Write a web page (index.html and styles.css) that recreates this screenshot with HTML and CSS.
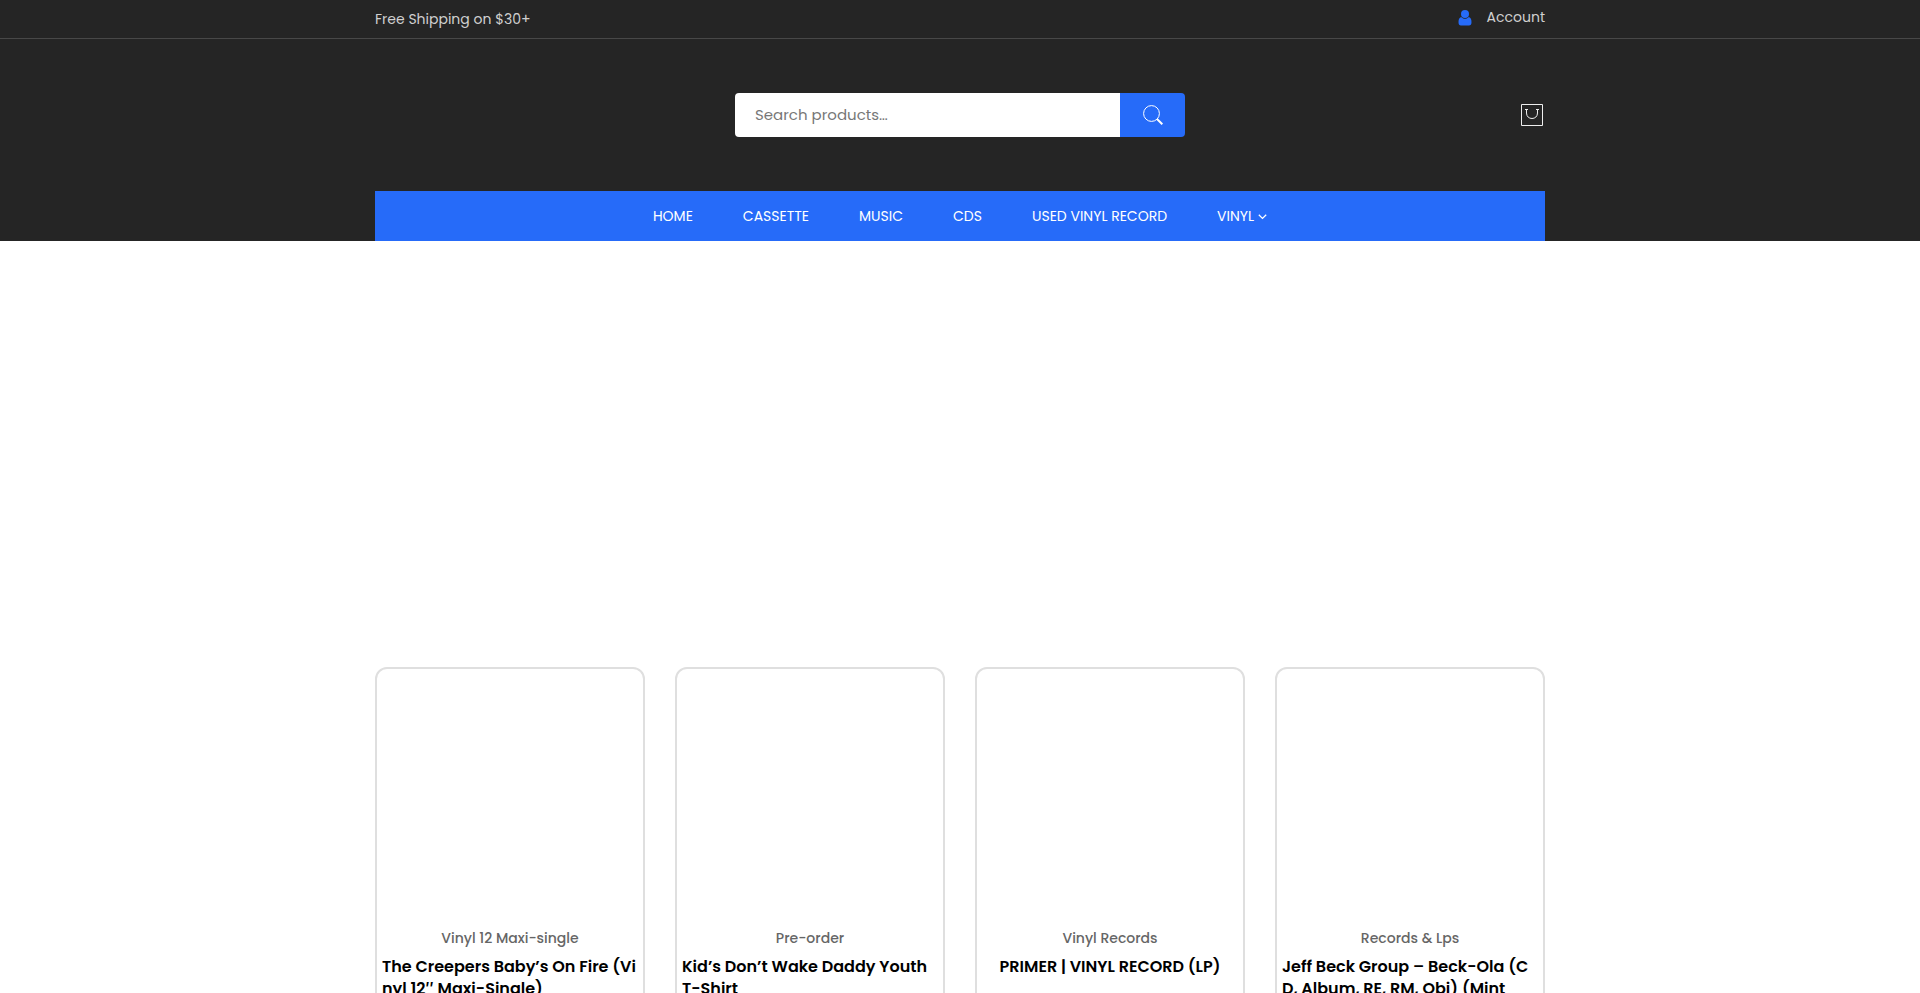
FILE: index.html
```html
<!DOCTYPE html>
<html lang="en">
<head>
<meta charset="utf-8">
<meta name="viewport" content="width=device-width, initial-scale=1">
<title>Record Store</title>
<link rel="stylesheet" href="styles.css">
</head>
<body>
<header class="site-header">
  <div class="topbar">
    <div class="container topbar-row">
      <span class="shipping">Free Shipping on $30+</span>
      <a class="account" href="#">
        <svg class="account-icon" viewBox="0 0 14 16" aria-hidden="true"><circle cx="7" cy="4" r="4"/><path d="M3.200 7C1.200 7.600.5 9.500.5 12.200.5 14.500 1.400 15.500 3 15.500H11C12.600 15.500 13.500 14.500 13.500 12.200 13.500 9.500 12.800 7.600 10.800 7 9.800 8.200 8.500 8.800 7 8.800 5.500 8.800 4.200 8.200 3.200 7Z"/></svg>
        <span>Account</span>
      </a>
    </div>
  </div>
  <div class="container main-row">
    <form class="search" role="search">
      <input class="search-input" type="search" placeholder="Search products…" aria-label="Search products">
      <button class="search-button" type="button" aria-label="Search">
        <svg class="search-icon" viewBox="0 0 20 20" aria-hidden="true"><circle cx="8.500" cy="8.500" r="7.900"/><path d="M14 14 19.300 19.300" class="handle"/></svg>
      </button>
    </form>
    <a class="cart" href="#" aria-label="Cart">
      <svg class="cart-icon" viewBox="0 0 22 22" aria-hidden="true"><path d="M.5.5H21.500V21.500H.5Z"/><path d="M4 5.500H7M15 5.500H18M5.500 5.500V9C5.500 12.500 8 14.500 11 14.500S16.500 12.500 16.500 9V5.500"/></svg>
    </a>
  </div>
  <div class="container">
    <nav class="nav" aria-label="Main">
      <a href="#">HOME</a>
      <a href="#">CASSETTE</a>
      <a href="#">MUSIC</a>
      <a href="#">CDS</a>
      <a href="#">USED VINYL RECORD</a>
      <a href="#">VINYL <svg class="chevron" viewBox="0 0 9 9" aria-hidden="true"><path d="M.8 2.700 4.500 6.400 8.200 2.700"/></svg></a>
    </nav>
  </div>
</header>
<main class="container products">
  <article class="card">
    <div class="card-image"></div>
    <a class="category" href="#">Vinyl 12 Maxi-single</a>
    <h2 class="title"><a href="#">The Creepers Baby’s On Fire (Vi<br>nyl 12″ Maxi-Single)</a></h2>
  </article>
  <article class="card">
    <div class="card-image"></div>
    <a class="category" href="#">Pre-order</a>
    <h2 class="title"><a href="#">Kid’s Don’t Wake Daddy Youth<br>T-Shirt</a></h2>
  </article>
  <article class="card">
    <div class="card-image"></div>
    <a class="category" href="#">Vinyl Records</a>
    <h2 class="title title-short"><a href="#">PRIMER | VINYL RECORD (LP)</a></h2>
  </article>
  <article class="card">
    <div class="card-image"></div>
    <a class="category" href="#">Records &amp; Lps</a>
    <h2 class="title"><a href="#">Jeff Beck Group – Beck-Ola (C<br>D, Album, RE, RM, Obi) (Mint</a></h2>
  </article>
</main>
</body>
</html>
```
FILE: styles.css
```css
* { box-sizing: border-box; }
body {
  margin: 0;
  height: 100vh;
  overflow: hidden;
  background: #fff;
  color: #000;
  font-family: Poppins, Inter, "Open Sans", sans-serif;
  font-size: 14px;
  line-height: 22px;
}
a { color: inherit; text-decoration: none; }
svg { display: block; fill: none; stroke: currentColor; }
.container {
  width: 100%;
  max-width: 1200px;
  margin: 0 auto;
  padding: 0 15px;
}
.site-header { background: #252525; }
.topbar { border-bottom: 1px solid #484848; color: #d0d0d0; }
.topbar-row { display: flex; justify-content: space-between; align-items: flex-start; height: 38px; }
.shipping { padding-top: 8px; }
.account { display: flex; align-items: flex-end; gap: 15px; padding-top: 6px; }
.account-icon { width: 14px; height: 16px; margin-bottom: 2px; color: #266bf9; fill: currentColor; stroke: none; }
.main-row {
  display: grid;
  grid-template-columns: 1fr minmax(0, 450px) 1fr;
  align-items: center;
  padding-top: 54px;
  padding-bottom: 54px;
}
.search { grid-column: 2; display: flex; height: 44px; overflow: hidden; border-radius: 4px; }
.search-input {
  flex: 1;
  min-width: 0;
  border: 0;
  padding: 0 20px;
  background: #fff;
  color: #333;
  font: inherit;
  font-size: 15px;
  outline: 0;
}
.search-input::placeholder { color: #777; opacity: 1; }
.search-button {
  width: 65px;
  border: 0;
  padding: 0;
  display: grid;
  place-items: center;
  background: #266bf9;
  color: #fff;
}
.search-icon { width: 20px; height: 20px; }
.handle { stroke-width: 2; }
.cart { justify-self: end; padding-right: 2px; color: #eee; }
.cart-icon { width: 22px; height: 22px; }
.nav {
  display: flex;
  justify-content: center;
  flex-wrap: wrap;
  gap: 0 50px;
  background: #266bf9;
  color: #fff;
  line-height: 50px;
}
.nav a { display: flex; align-items: center; gap: 4px; }
.chevron { width: 9px; height: 9px; stroke-width: 1.300; }
.products {
  display: grid;
  grid-template-columns: repeat(4, minmax(0, 1fr));
  gap: 30px;
  margin-top: 426px;
}
.card {
  display: flex;
  flex-direction: column;
  align-items: center;
  border: 2px solid #dfdfdf;
  border-radius: 12px;
  padding: 0 5px 40px;
}
.card-image { width: 100%; height: 258px; }
.category { color: #666; font-weight: 500; }
.title {
  width: 100%;
  margin: 7px 0 0;
  font-size: 16px;
  font-weight: 600;
  line-height: 22px;
  white-space: nowrap;
}
.title-short { text-align: center; }
```
